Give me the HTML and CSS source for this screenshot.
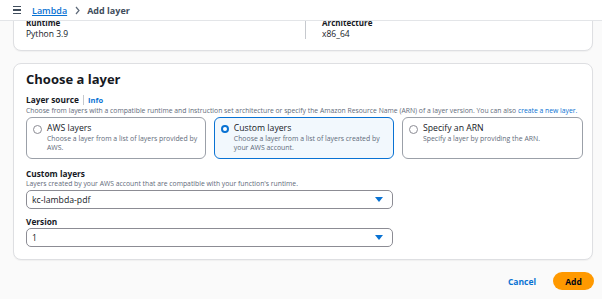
FILE: index.html
```html
<!DOCTYPE html>
<html lang="en">
<head>
  <meta charset="UTF-8" />
  <title>Add layer</title>
  <link rel="stylesheet" href="styles.css">
</head>
<body>
  <header class="topbar">
    <span class="menu"><i></i><i></i><i></i></span>
    <a href="#" class="crumb">Lambda</a>
    <svg class="chev" width="5" height="9" viewBox="0 0 5 9"><path d="M1 1l3 3.5L1 8" fill="none" stroke="#5f6b7a" stroke-width="1.2"/></svg>
    <span class="current">Add layer</span>
  </header>

  <main class="page">
    <section class="card summary">
      <div class="col">
        <div class="label">Runtime</div>
        <div class="value">Python 3.9</div>
      </div>
      <div class="col split">
        <div class="label">Architecture</div>
        <div class="value">x86_64</div>
      </div>
    </section>

    <section class="card form">
      <h2>Choose a layer</h2>
      <div class="field-label">Layer source <span class="info">Info</span></div>
      <div class="hint">Choose from layers with a compatible runtime and instruction set architecture or specify the Amazon Resource Name (ARN) of a layer version. You can also <a href="#">create a new layer.</a></div>

      <div class="tiles">
        <label class="tile">
          <span class="radio"></span>
          <span class="tile-body">
            <span class="tile-title">AWS layers</span>
            <span class="tile-desc">Choose a layer from a list of layers provided by AWS.</span>
          </span>
        </label>
        <label class="tile selected">
          <span class="radio"></span>
          <span class="tile-body">
            <span class="tile-title">Custom layers</span>
            <span class="tile-desc">Choose a layer from a list of layers created by your AWS account.</span>
          </span>
        </label>
        <label class="tile">
          <span class="radio"></span>
          <span class="tile-body">
            <span class="tile-title">Specify an ARN</span>
            <span class="tile-desc">Specify a layer by providing the ARN.</span>
          </span>
        </label>
      </div>

      <div class="field-label gap">Custom layers</div>
      <div class="hint">Layers created by your AWS account that are compatible with your function's runtime.</div>
      <div class="select">
        <span>kc-lambda-pdf</span>
        <svg width="8" height="5" viewBox="0 0 8 5"><path d="M0 0h8L4 5z" fill="#0972d3"/></svg>
      </div>

      <div class="field-label version">Version</div>
      <div class="select">
        <span>1</span>
        <svg width="8" height="5" viewBox="0 0 8 5"><path d="M0 0h8L4 5z" fill="#0972d3"/></svg>
      </div>
    </section>

    <div class="actions">
      <a href="#" class="cancel">Cancel</a>
      <button class="primary">Add</button>
    </div>
  </main>
</body>
</html>
```

FILE: styles.css
```css
body {
  margin: 0;
  font-family: "Open Sans", "Noto Sans", sans-serif;
  background: #fafafa;
  color: #16191f;
}
.topbar {
  position: fixed;
  top: 0;
  left: 0;
  right: 0;
  height: 20px;
  background: #fff;
  border-bottom: 1px solid #e3e5e8;
  display: flex;
  align-items: center;
  padding-left: 13px;
  z-index: 2;
}
.menu {
  display: flex;
  flex-direction: column;
  gap: 2px;
  width: 8px;
  margin-right: 11px;
}
.menu i {
  display: block;
  height: 1.3px;
  background: #414d5c;
}
.crumb {
  color: #0972d3;
  font-size: 9px;
  font-weight: 600;
}
.chev {
  margin: 0 7px 0 8px;
}
.current {
  color: #414d5c;
  font-size: 9px;
  font-weight: 700;
}
.page {
  padding: 6px 9px 0 13px;
}
.card {
  background: #fff;
  border: 1px solid #dedfe2;
  border-radius: 8px;
  box-shadow: 0 1px 1px rgba(0,0,0,0.04);
}
.summary {
  display: grid;
  grid-template-columns: 279px 1fr;
  padding: 11px 12px 11px;
}
.split {
  border-left: 1px solid #c6c9ce;
  padding-left: 16px;
}
.label {
  font-size: 8px;
  font-weight: 700;
  line-height: 10px;
}
.value {
  font-size: 8.5px;
  line-height: 11px;
}
.form {
  margin-top: 12px;
  padding: 7px 11px 12px 12px;
}
h2 {
  margin: 0;
  font-size: 13px;
  line-height: 17px;
  font-weight: 700;
}
.field-label {
  font-size: 8.3px;
  font-weight: 700;
  line-height: 11px;
  margin-top: 6px;
}
.field-label.gap {
  margin-top: 9px;
}
.field-label.version {
  margin-top: 7px;
}
.info {
  color: #0972d3;
  font-size: 7.5px;
  border-left: 1px solid #c6c9ce;
  padding-left: 4px;
  margin-left: 2px;
}
.hint {
  font-size: 6.8px;
  line-height: 10px;
  color: #5f6b7a;
}
.hint a {
  color: #0972d3;
  text-decoration: none;
}
.tiles {
  display: grid;
  grid-template-columns: 180px 180px 181px;
  gap: 8px;
  margin-top: 1px;
}
.tile {
  display: flex;
  align-items: flex-start;
  gap: 5px;
  border: 1px solid #9ba0a8;
  border-radius: 6px;
  padding: 5px 6px 5px 6px;
  height: 30px;
}
.tile.selected {
  border-color: #0972d3;
  background: #f2f8fd;
}
.radio {
  flex: none;
  width: 7px;
  height: 7px;
  border: 1px solid #8c8c94;
  border-radius: 50%;
  margin-top: 2px;
  background: #fff;
}
.selected .radio {
  border: 2.6px solid #0972d3;
  width: 3.8px;
  height: 3.8px;
}
.tile-body {
  display: flex;
  flex-direction: column;
}
.tile-title {
  font-size: 8.7px;
  line-height: 11px;
}
.tile-desc {
  font-size: 6.9px;
  line-height: 9px;
  color: #5f6b7a;
}
.select {
  width: 351px;
  height: 17px;
  border: 1px solid #8c8c94;
  border-radius: 5px;
  display: flex;
  align-items: center;
  justify-content: space-between;
  padding: 0 9px 0 5px;
  margin-top: 1px;
  font-size: 8.7px;
}
.actions {
  display: flex;
  justify-content: flex-end;
  align-items: center;
  gap: 17px;
  margin-top: 12px;
  margin-right: -1px;
}
.cancel {
  color: #0972d3;
  font-size: 8.5px;
  font-weight: 700;
  text-decoration: none;
}
.primary {
  background: #ff9900;
  border: none;
  border-radius: 9px;
  width: 41px;
  height: 18px;
  font-family: inherit;
  font-size: 8.5px;
  font-weight: 700;
  color: #000716;
  padding: 0;
}
```
